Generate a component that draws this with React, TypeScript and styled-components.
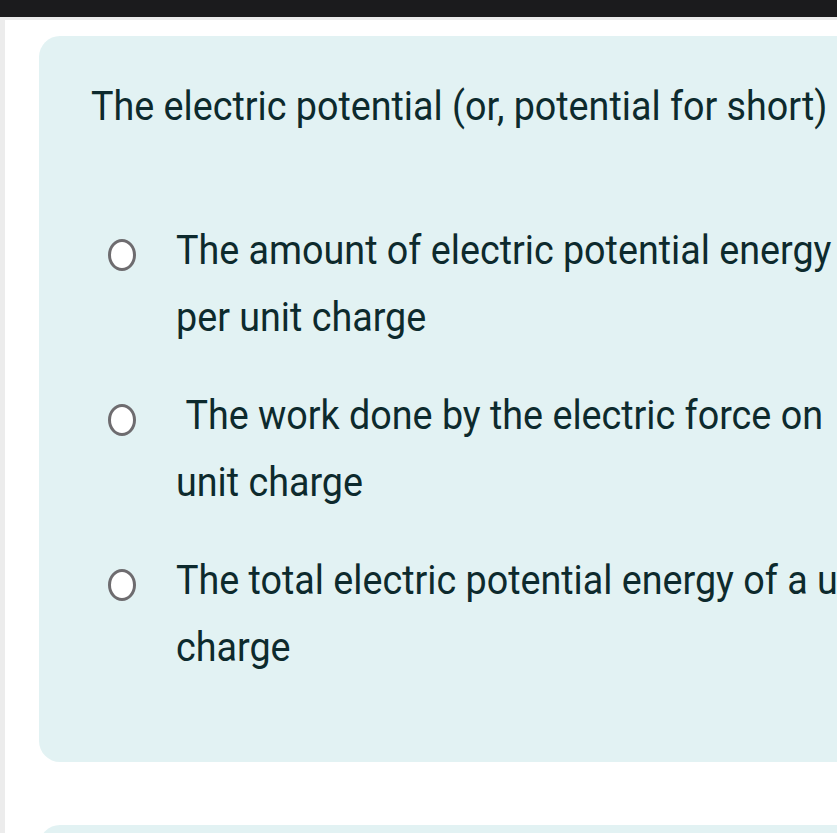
import React from "react";
import styled, { createGlobalStyle } from "styled-components";

const Global = createGlobalStyle`
  html, body { margin: 0; padding: 0; background: #ececec; overflow: hidden; }
  body { font-family: Roboto, "Noto Sans", sans-serif; }
`;

const StatusBar = styled.div`
  height: 17px;
  background: #1b1b1d;
`;

const Screen = styled.div`
  margin-top: 3px;
  margin-left: 5px;
  background: #ffffff;
  height: 813px;
  padding: 16px 0 0 34px;
  box-sizing: border-box;
  overflow: hidden;
  display: flex;
  flex-direction: column;
  gap: 63px;
`;

const Card = styled.section<{ $h?: number }>`
  background: #e2f2f3;
  border-radius: 21px;
  width: 900px;
  min-height: ${(p) => (p.$h ? `${p.$h}px` : "auto")};
  padding: 47px 0 0 52px;
  box-sizing: border-box;
  flex-shrink: 0;
`;

const Question = styled.div`
  font-size: 40px;
  line-height: 48px;
  color: #0d2a2d;
  white-space: nowrap;
  transform: scaleX(0.942);
  transform-origin: left center;
`;

const Options = styled.div`
  margin-top: 86px;
  display: flex;
  flex-direction: column;
  gap: 31px;
`;

const Option = styled.label`
  display: flex;
  align-items: flex-start;
`;

const Radio = styled.span`
  width: 22px;
  height: 26px;
  margin: 22px 0 0 17px;
  border: 3px solid #6e6c6f;
  border-radius: 50%;
  background: #ffffff;
  flex-shrink: 0;
`;

const OptionText = styled.div`
  margin-left: 40px;
  font-size: 40px;
  line-height: 67px;
  color: #0d2a2d;
  white-space: nowrap;
  transform: scaleX(0.942);
  transform-origin: left center;
`;

const Line = styled.div<{ $shift?: number }>`
  margin-left: ${(p) => p.$shift ?? 0}px;
`;

const options = [
  { lines: ["The amount of electric potential energy", "per unit charge"], shift: 0 },
  { lines: ["The work done by the electric force on", "unit charge"], shift: 10 },
  { lines: ["The total electric potential energy of a unit", "charge"], shift: 0 },
];

export default function App() {
  return (
    <>
      <Global />
      <StatusBar />
      <Screen>
        <Card $h={726}>
          <Question>The electric potential (or, potential for short)</Question>
          <Options>
            {options.map((o, i) => (
              <Option key={i}>
                <Radio />
                <OptionText>
                  <Line $shift={o.shift}>{o.lines[0]}</Line>
                  <Line>{o.lines[1]}</Line>
                </OptionText>
              </Option>
            ))}
          </Options>
        </Card>
        <Card $h={200} />
      </Screen>
    </>
  );
}
